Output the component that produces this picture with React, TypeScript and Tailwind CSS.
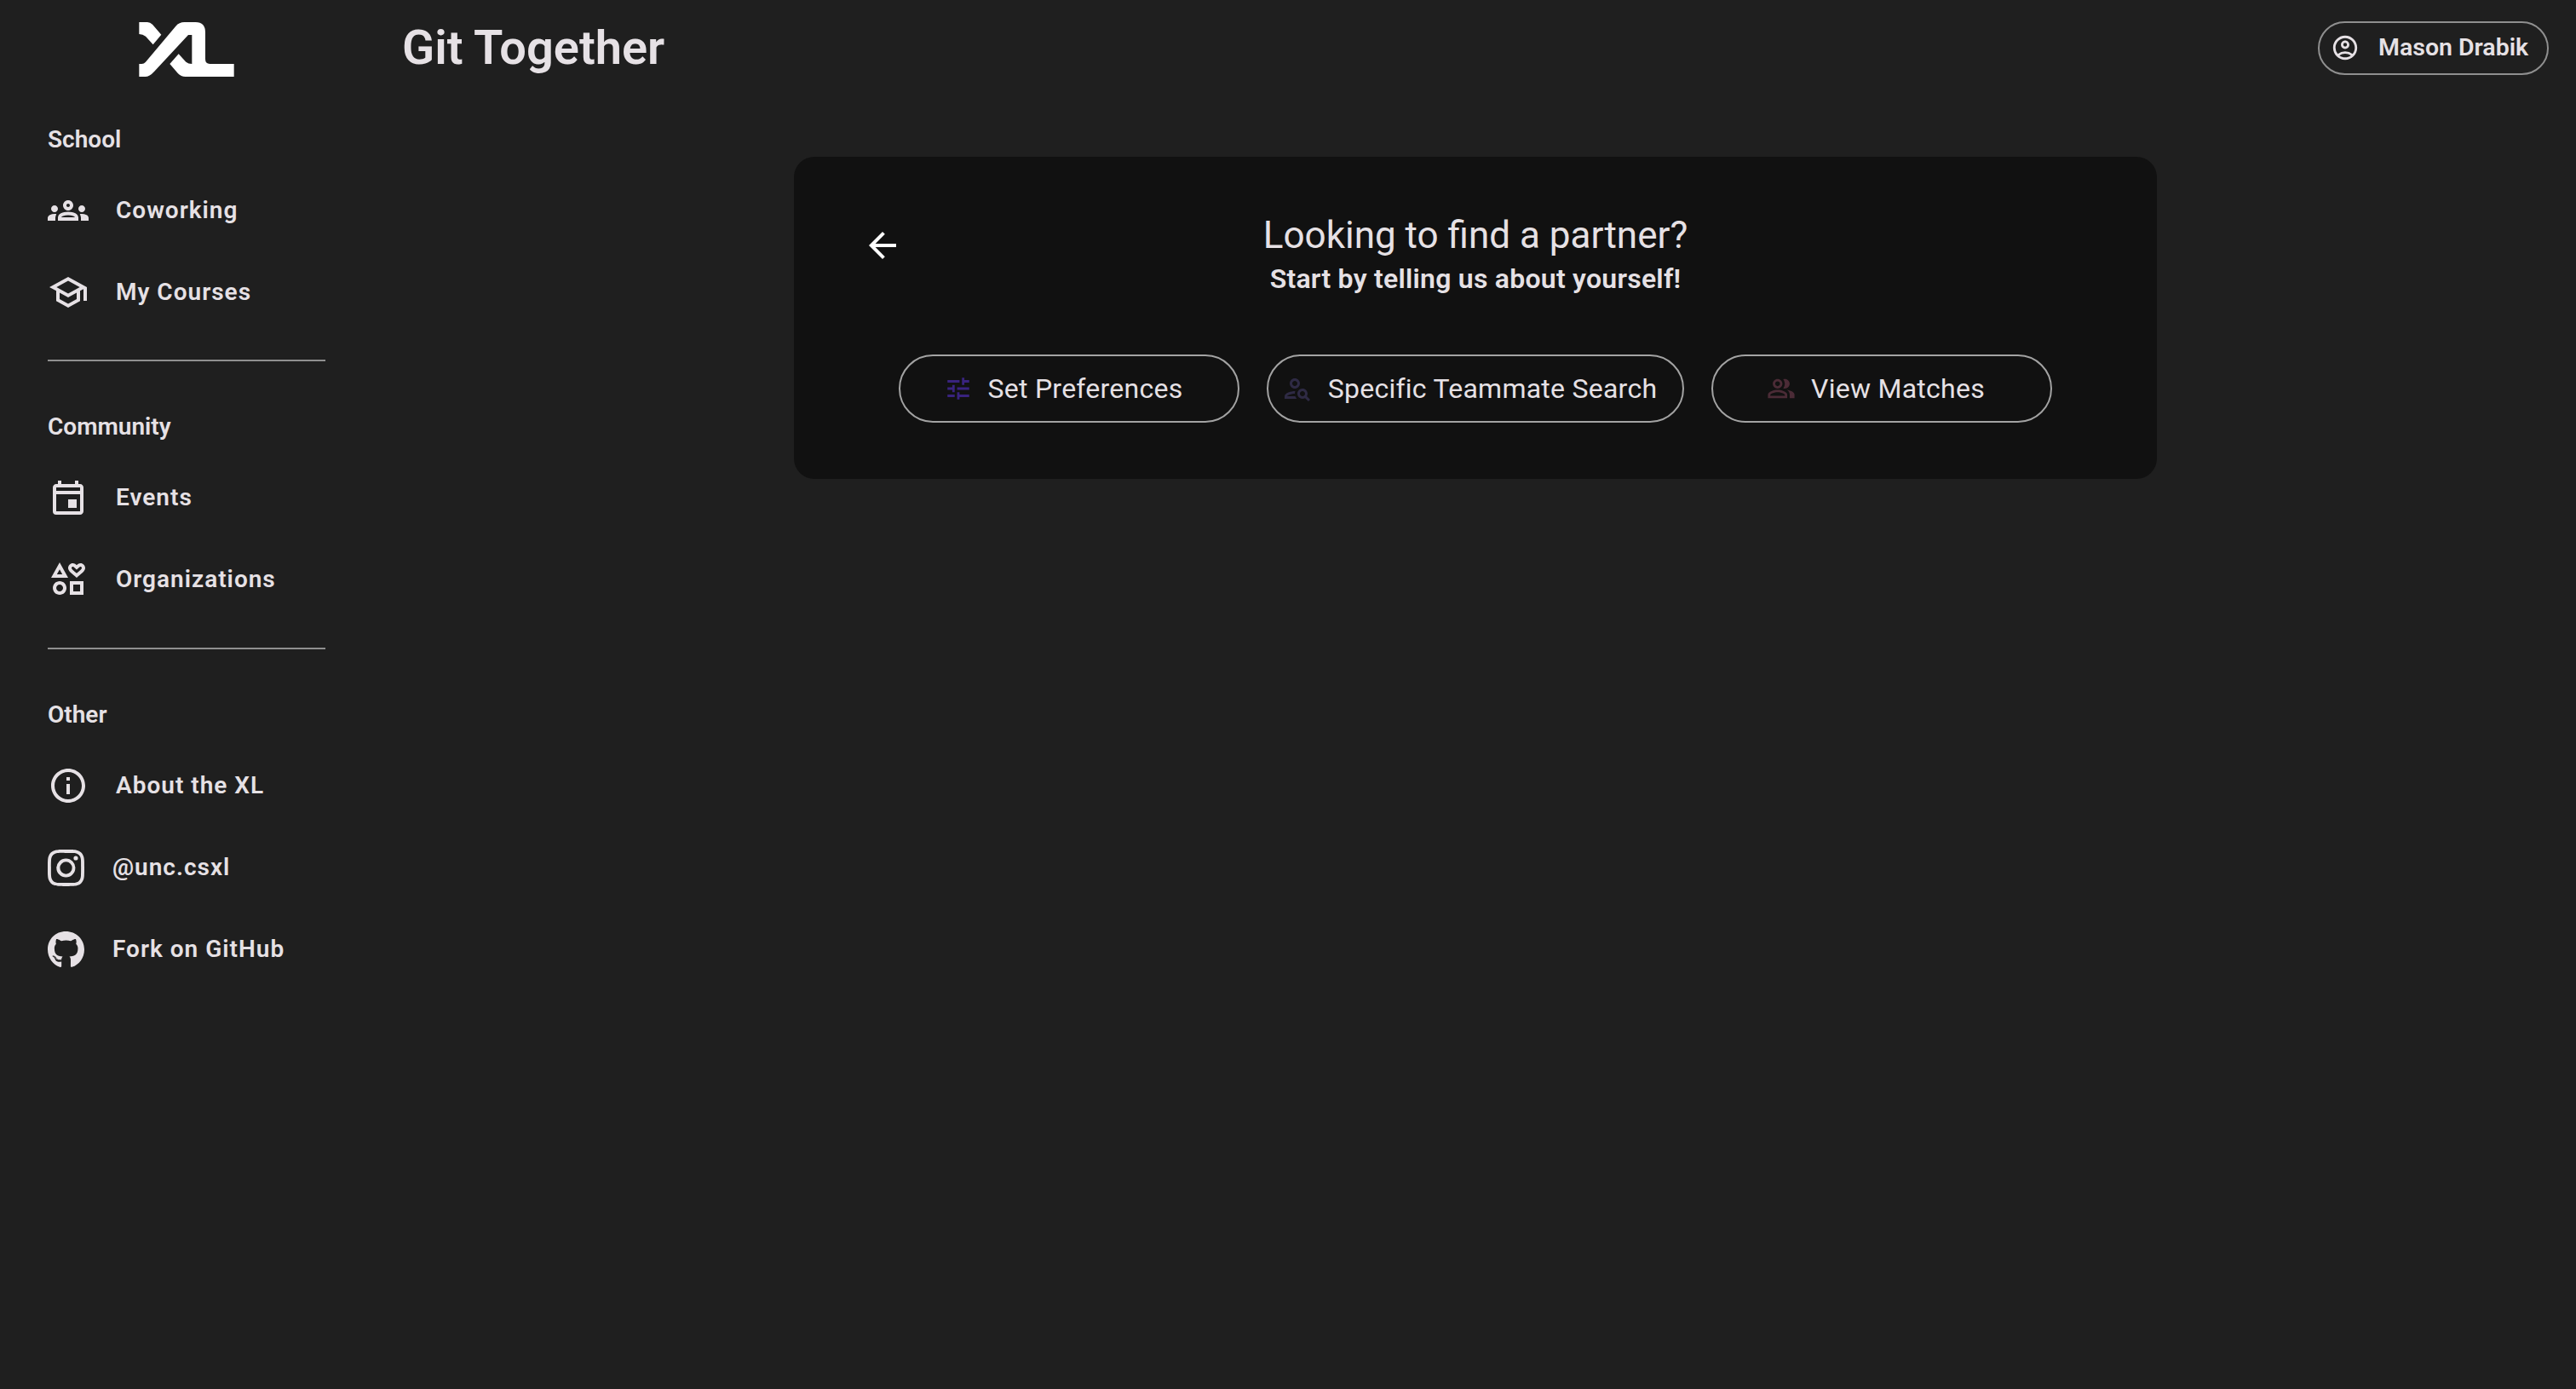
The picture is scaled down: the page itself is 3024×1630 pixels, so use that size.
import React from "react";
import { MdOutlineGroups, MdOutlineSchool, MdOutlineEvent, MdOutlineInterests, MdInfoOutline, MdOutlineAccountCircle, MdTune, MdOutlinePersonSearch, MdOutlinePeopleAlt, MdArrowBack } from "react-icons/md";
import { BsInstagram } from "react-icons/bs";
import { FaGithub } from "react-icons/fa";

const navIcon = { color: "#e6e1e5" };

function Logo() {
  return (
    <svg viewBox="99 48 334 192" className="w-[112px] h-[64px]" fill="#fff">
      <path d="M99 48H128Q138 48 146 56L177 92L148 127L122 98Q112 90 99 90Z" />
      <path d="M99 195H108Q116 195 122 188L228 62Q240 48 258 48H298Q332 48 332 84V178Q332 195 348 195H433V240H262Q246 240 236 229L207 195L238 160L264 188Q272 195 285 195V93H272L152 222Q136 240 120 240H99Z" />
    </svg>
  );
}

function Item({ icon, label, gap = "gap-8", iconBox = "w-12" }: { icon: React.ReactNode; label: string; gap?: string; iconBox?: string }) {
  return (
    <div className={`flex items-center h-[96px] ${gap}`}>
      <div className={`flex items-center justify-center shrink-0 ${iconBox}`}>{icon}</div>
      <span className="-mt-[1px] text-[28px] font-semibold tracking-[1px] text-[#e6e1e5]">{label}</span>
    </div>
  );
}

function Label({ children }: { children: React.ReactNode }) {
  return <div className="h-[70px] flex items-center text-[28px] font-semibold text-[#e6e1e5]">{children}</div>;
}

function PillButton({ icon, label, className }: { icon: React.ReactNode; label: string; className: string }) {
  return (
    <div className={`h-[80px] flex items-center justify-center gap-[18px] pr-[14px] rounded-full border-2 border-[#a3a3a3] text-[32px] tracking-[0.25px] text-[#e6e1e5] ${className}`}>
      {icon}
      <span>{label}</span>
    </div>
  );
}

export default function App() {
  return (
    <div className="flex w-full min-h-[1630px] bg-[#1f1f1f] font-['Roboto',sans-serif]">
      <aside className="w-[440px] shrink-0 pl-[56px] pr-[58px]">
        <div className="h-[129px] flex justify-center pt-[26px] -ml-[1px]">
          <Logo />
        </div>
        <Label>School</Label>
        <Item icon={<MdOutlineGroups size={54} {...navIcon} />} label="Coworking" />
        <Item icon={<MdOutlineSchool size={54} {...navIcon} />} label="My Courses" />
        <div className="h-[2px] bg-[#8f8f8f] mt-[31px] mb-[42px]" />
        <Label>Community</Label>
        <Item icon={<MdOutlineEvent size={50} {...navIcon} />} label="Events" />
        <Item icon={<MdOutlineInterests size={52} {...navIcon} />} label="Organizations" />
        <div className="h-[2px] bg-[#8f8f8f] mt-[32px] mb-[42px]" />
        <Label>Other</Label>
        <Item icon={<MdInfoOutline size={50} {...navIcon} />} label="About the XL" />
        <Item icon={<BsInstagram size={43} color="#e6e1e5" />} label="@unc.csxl" iconBox="w-[43px]" gap="gap-[33px]" />
        <Item icon={<FaGithub size={45} color="#e6e1e5" />} label="Fork on GitHub" iconBox="w-[43px]" gap="gap-[33px]" />
      </aside>
      <main className="flex-1 flex flex-col">
        <header className="h-[112px] flex items-center justify-between pl-8 pr-[32px]">
          <h1 className="text-[56px] font-semibold text-[#e6e1e5]">Git Together</h1>
          <div className="h-[63px] w-[271px] flex items-center gap-[22px] pl-[13px] rounded-full border-2 border-[#8f8f8f]">
            <MdOutlineAccountCircle size={34} color="#e6e1e5" />
            <span className="text-[28.5px] font-semibold text-[#e6e1e5]">Mason Drabik</span>
          </div>
        </header>
        <section className="mt-[72px] mx-auto w-[1600px] h-[378px] rounded-[24px] bg-[#111111] px-[80px] pt-[64px] flex flex-col">
          <div className="flex">
            <div className="w-12 h-12 mt-4 shrink-0 flex items-center justify-center">
              <MdArrowBack size={48} color="#ffffff" />
            </div>
            <div className="flex-1 flex flex-col items-center">
              <div className="-mt-[1px] text-[44px] leading-[59px] text-[#e6e1e5]">Looking to find a partner?</div>
              <div className="text-[32px] leading-[42px] font-semibold tracking-[0.24px] text-[#e6e1e5]">Start by telling us about yourself!</div>
            </div>
            <div className="w-12 shrink-0" />
          </div>
          <div className="flex justify-center gap-8 mt-[68px]">
            <PillButton className="w-[400px]" icon={<MdTune size={34} color="#39237f" />} label="Set Preferences" />
            <PillButton className="w-[490px]" icon={<MdOutlinePersonSearch size={36} color="#2e2a44" />} label="Specific Teammate Search" />
            <PillButton className="w-[400px]" icon={<MdOutlinePeopleAlt size={34} color="#4b2b36" />} label="View Matches" />
          </div>
        </section>
      </main>
    </div>
  );
}
